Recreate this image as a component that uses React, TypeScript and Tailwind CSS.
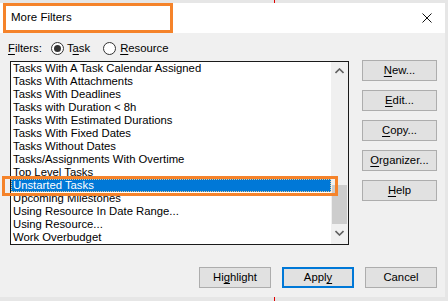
import React from "react";

const FILTERS = [
  "Tasks With A Task Calendar Assigned",
  "Tasks With Attachments",
  "Tasks With Deadlines",
  "Tasks with Duration < 8h",
  "Tasks With Estimated Durations",
  "Tasks With Fixed Dates",
  "Tasks Without Dates",
  "Tasks/Assignments With Overtime",
  "Top Level Tasks",
  "Unstarted Tasks",
  "Upcoming Milestones",
  "Using Resource In Date Range...",
  "Using Resource...",
  "Work Overbudget",
];

const SELECTED = 9;

// label with the access key underlined
function Key({ text, at }: { text: string; at: number }) {
  if (at < 0) return <>{text}</>;
  return (
    <>
      {text.slice(0, at)}
      <span className="underline underline-offset-[2px]">{text[at]}</span>
      {text.slice(at + 1)}
    </>
  );
}

function Button({
  text,
  at,
  width,
  primary,
}: {
  text: string;
  at: number;
  width: string;
  primary?: boolean;
}) {
  return (
    <div
      className={`${width} h-[21px] flex items-center justify-center bg-[#e1e1e1] text-[#000] ${
        primary ? "border-2 border-[#0078d7]" : "border border-[#adadad]"
      }`}
    >
      <span>
        <Key text={text} at={at} />
      </span>
    </div>
  );
}

function Radio({ checked }: { checked?: boolean }) {
  return (
    <span className="w-[13px] h-[13px] rounded-full border border-[#333] bg-white flex items-center justify-center">
      {checked && <span className="w-[7px] h-[7px] rounded-full bg-[#333]" />}
    </span>
  );
}

export default function App() {
  return (
    <div
      className="w-[448px] h-[301px] bg-[#e6e6e6] pt-[3px] pr-[3px] pb-[4px] overflow-hidden relative text-[11.3px] text-black"
      style={{ fontFamily: '"Liberation Sans", Arial, sans-serif' }}
    >
      {/* bits of the project view behind the dialog */}
      <div className="absolute left-[274px] top-0 w-px h-[3px] bg-[#e00000]" />
      <div className="absolute left-[274px] bottom-0 w-px h-[4px] bg-[#e00000]" />

      <div className="h-full bg-[#f0f0f0] flex flex-col">
        {/* Title bar */}
        <div className="h-[30px] bg-white flex items-center justify-between pl-[11px] pr-[13px] relative">
          <span className="text-[11.5px]">More Filters</span>
          <svg width="10" height="10" viewBox="0 0 10 10">
            <path d="M0.5 0.5 L9.5 9.5 M9.5 0.5 L0.5 9.5" stroke="#111" strokeWidth="1" />
          </svg>
          <div className="absolute left-[3px] top-0 w-[170px] h-[30px] border-[3px] border-[#f5832a]" />
        </div>

        {/* Body */}
        <div className="flex-1 flex flex-col pl-[8px] pr-[8px] pb-[9px] relative">
          <div className="mt-[8px] h-[14px] flex items-center">
            <span>
              <Key text="Filters:" at={0} />
            </span>
            <span className="ml-[9px]">
              <Radio checked />
            </span>
            <span className="ml-[3px]">
              <Key text="Task" at={1} />
            </span>
            <span className="ml-[13px]">
              <Radio />
            </span>
            <span className="ml-[4px]">
              <Key text="Resource" at={0} />
            </span>
          </div>

          <div className="flex mt-[6px]">
            {/* List box */}
            <div className="ml-[2px] w-[339px] h-[184px] border border-[#1a1a1a] bg-white flex">
              <div className="flex-1 flex flex-col">
                {FILTERS.map((f, i) => (
                  <div
                    key={f}
                    className={`h-[13px] leading-[13px] pl-[2px] whitespace-nowrap ${
                      i === SELECTED
                        ? "bg-[#0078d7] text-white outline-1 outline-dotted outline-[#e8c890] -outline-offset-1"
                        : ""
                    }`}
                  >
                    {f}
                  </div>
                ))}
              </div>
              <div className="w-[17px] bg-[#f0f0f0] flex flex-col items-center">
                <svg className="mt-[6px]" width="9" height="6" viewBox="0 0 9 6">
                  <path d="M0.5 5 L4.5 1 L8.5 5" stroke="#606060" strokeWidth="1.6" fill="none" />
                </svg>
                <div className="mt-[111px] w-[15px] h-[39px] bg-[#cdcdcd]" />
                <svg className="mt-[6px]" width="9" height="6" viewBox="0 0 9 6">
                  <path d="M0.5 1 L4.5 5 L8.5 1" stroke="#606060" strokeWidth="1.6" fill="none" />
                </svg>
              </div>
            </div>

            {/* Side buttons */}
            <div className="ml-[13px] -mt-[1px] flex flex-col gap-[9px]">
              <Button text="New..." at={0} width="w-[75px]" />
              <Button text="Edit..." at={0} width="w-[75px]" />
              <Button text="Copy..." at={0} width="w-[75px]" />
              <Button text="Organizer..." at={0} width="w-[75px]" />
              <Button text="Help" at={0} width="w-[75px]" />
            </div>
          </div>

          {/* Bottom buttons */}
          <div className="mt-auto flex justify-end gap-[11px]">
            <Button text="Highlight" at={2} width="w-[72px]" />
            <Button text="Apply" at={4} width="w-[72px]" primary />
            <Button text="Cancel" at={-1} width="w-[72px]" />
          </div>

          {/* orange callout around the selected filter */}
          <div className="absolute left-[2px] top-[143px] w-[336px] h-[20px] border-[3px] border-[#f5832a]" />
        </div>
      </div>
    </div>
  );
}
